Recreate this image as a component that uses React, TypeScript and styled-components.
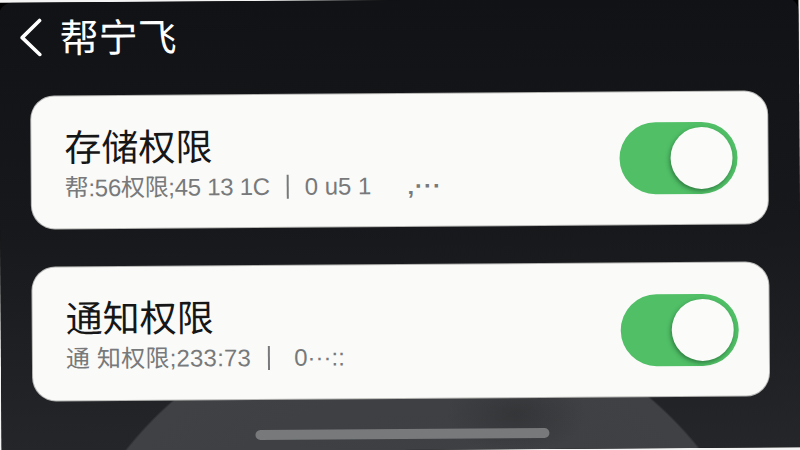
import React from 'react';
import styled, { createGlobalStyle } from 'styled-components';

const GlobalStyle = createGlobalStyle`
  html, body {
    margin: 0;
    width: 800px;
    height: 450px;
    overflow: hidden;
    background: #f4f4f4;
  }
`;

const Frame = styled.div`
  width: 800px;
  height: 450px;
  background: #000;
  transform: rotate(-0.4deg);
  font-family: "Noto Sans CJK SC", "Noto Sans", sans-serif;
`;

const Screen = styled.main`
  box-sizing: border-box;
  width: 100%;
  height: 100%;
  padding: 0 32px 11px;
  display: flex;
  flex-direction: column;
  border-radius: 14px 14px 0 0;
  background:
    radial-gradient(ellipse 70px 40px at 515px 415px, rgba(38, 40, 42, 0.45), rgba(38, 40, 42, 0)),
    radial-gradient(circle 367px at 410px 677px, #3b3d40 0, #3f4144 99.4%, rgba(63, 65, 68, 0) 100%),
    linear-gradient(180deg, #101215 0%, #16181b 50%, #24262a 100%);
`;

const Header = styled.header`
  height: 94px;
  flex-shrink: 0;
  display: flex;
  align-items: flex-start;
  gap: 17px;
  margin-left: -12px;
  padding-top: 14px;
  box-sizing: border-box;
  color: #fff;
`;

const BackIcon = styled.svg`
  width: 24px;
  height: 40px;
  flex-shrink: 0;
`;

const HeaderTitle = styled.h1`
  margin: 0;
  font-size: 39px;
  line-height: 38px;
  font-weight: 400;
`;

const CardList = styled.div`
  display: flex;
  flex-direction: column;
  gap: 39px;
`;

const Card = styled.section<{ $height: number }>`
  box-sizing: border-box;
  height: ${(p) => p.$height}px;
  padding: 0 30px 0 33px;
  display: flex;
  align-items: center;
  justify-content: space-between;
  background: #fafaf9;
  border-radius: 23px;
  box-shadow: 0 0 0 1px #b5b5b3;
`;

const CardText = styled.div`
  display: flex;
  flex-direction: column;
  gap: 4px;
  margin-top: 1px;
`;

const CardTitle = styled.h2`
  margin: 0;
  color: #161616;
  font-size: 37px;
  line-height: 46px;
  font-weight: 400;
`;

const CardMeta = styled.p`
  margin: 0;
  display: flex;
  align-items: center;
  color: #77797a;
  font-family: "Liberation Sans", "Noto Sans CJK SC", sans-serif;
  font-size: 24px;
  line-height: 32px;
  white-space: pre;
`;

const MetaLead = styled.span<{ $tracking: number }>`
  letter-spacing: ${(p) => p.$tracking}px;
`;

const Divider = styled.span<{ $left: number; $right: number }>`
  width: 2px;
  height: 24px;
  margin: 0 ${(p) => p.$right}px 0 ${(p) => p.$left}px;
  background: #77797a;
`;

const Trailing = styled.span<{ $left: number }>`
  margin-left: ${(p) => p.$left}px;
  font-weight: 700;
  letter-spacing: 1px;
`;

const Toggle = styled.div`
  width: 118px;
  height: 72px;
  flex-shrink: 0;
  padding-right: 5px;
  box-sizing: border-box;
  display: flex;
  align-items: center;
  justify-content: flex-end;
  border-radius: 36px;
  background: #50bf66;
`;

const Knob = styled.div`
  width: 62px;
  height: 62px;
  border-radius: 50%;
  background: #fbfbfa;
  box-shadow: -1px 2px 4px rgba(20, 70, 35, 0.55);
`;

const HomeBar = styled.div`
  width: 294px;
  height: 10px;
  margin: auto auto 0 222px;
  border-radius: 5px;
  background: #77797b;
`;

const App: React.FC = () => {
  return (
    <Frame>
      <GlobalStyle />
      <Screen>
        <Header>
          <BackIcon viewBox="0 0 24 40" fill="none" stroke="#fff" strokeWidth="3.6" strokeLinecap="round" strokeLinejoin="round">
            <path d="M21 4 L3.5 21 L21 38" />
          </BackIcon>
          <HeaderTitle>帮宁飞</HeaderTitle>
        </Header>
        <CardList>
          <Card $height={132}>
            <CardText>
              <CardTitle>存储权限</CardTitle>
              <CardMeta>
                <MetaLead $tracking={-0.3}>帮:56权限;45 13 1C</MetaLead>
                <Divider $left={17} $right={16} />
                0 u5 1
                <Trailing $left={36}>‚···</Trailing>
              </CardMeta>
            </CardText>
            <Toggle>
              <Knob />
            </Toggle>
          </Card>
          <Card $height={133}>
            <CardText>
              <CardTitle>通知权限</CardTitle>
              <CardMeta>
                <MetaLead $tracking={0.2}>通 知权限;233:73</MetaLead>
                <Divider $left={17} $right={24} />
                0···::
              </CardMeta>
            </CardText>
            <Toggle>
              <Knob />
            </Toggle>
          </Card>
        </CardList>
        <HomeBar />
      </Screen>
    </Frame>
  );
};

export default App;
